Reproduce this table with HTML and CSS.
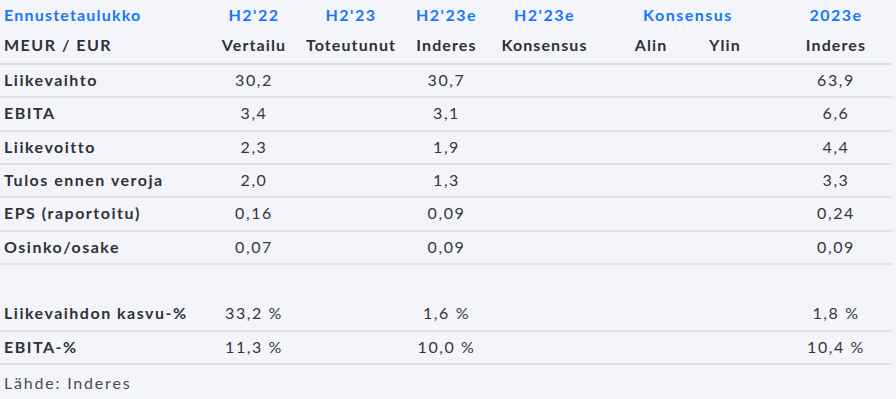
FILE: index.html
```html
<!DOCTYPE html>
<html lang="fi">
<head>
<meta charset="utf-8">
<title>Ennustetaulukko</title>
<link rel="stylesheet" href="styles.css">
</head>
<body>
<div class="table">
  <div class="head">
    <div class="row hrow1">
      <div class="c title">Ennustetaulukko</div>
      <div class="c blue">H2'22</div>
      <div class="c blue">H2'23</div>
      <div class="c blue">H2'23e</div>
      <div class="c blue">H2'23e</div>
      <div class="c blue span2">Konsensus</div>
      <div class="c blue">2023e</div>
    </div>
    <div class="row hrow2">
      <div class="c lab">MEUR / EUR</div>
      <div class="c b">Vertailu</div>
      <div class="c b">Toteutunut</div>
      <div class="c b">Inderes</div>
      <div class="c b">Konsensus</div>
      <div class="c b">Alin</div>
      <div class="c b ylin">Ylin</div>
      <div class="c b">Inderes</div>
    </div>
  </div>
  <div class="row d"><div class="c lab">Liikevaihto</div><div class="c v">30,2</div><div class="c v"></div><div class="c v">30,7</div><div class="c v"></div><div class="c v"></div><div class="c v"></div><div class="c v">63,9</div></div>
  <div class="row d"><div class="c lab">EBITA</div><div class="c v">3,4</div><div class="c v"></div><div class="c v">3,1</div><div class="c v"></div><div class="c v"></div><div class="c v"></div><div class="c v">6,6</div></div>
  <div class="row d"><div class="c lab">Liikevoitto</div><div class="c v">2,3</div><div class="c v"></div><div class="c v">1,9</div><div class="c v"></div><div class="c v"></div><div class="c v"></div><div class="c v">4,4</div></div>
  <div class="row d"><div class="c lab">Tulos ennen veroja</div><div class="c v">2,0</div><div class="c v"></div><div class="c v">1,3</div><div class="c v"></div><div class="c v"></div><div class="c v"></div><div class="c v">3,3</div></div>
  <div class="row d"><div class="c lab">EPS (raportoitu)</div><div class="c v">0,16</div><div class="c v"></div><div class="c v">0,09</div><div class="c v"></div><div class="c v"></div><div class="c v"></div><div class="c v">0,24</div></div>
  <div class="row d"><div class="c lab">Osinko/osake</div><div class="c v">0,07</div><div class="c v"></div><div class="c v">0,09</div><div class="c v"></div><div class="c v"></div><div class="c v"></div><div class="c v">0,09</div></div>
  <div class="row spacer"></div>
  <div class="row d"><div class="c lab">Liikevaihdon kasvu-%</div><div class="c v">33,2 %</div><div class="c v"></div><div class="c v">1,6 %</div><div class="c v"></div><div class="c v"></div><div class="c v"></div><div class="c v">1,8 %</div></div>
  <div class="row d"><div class="c lab">EBITA-%</div><div class="c v">11,3 %</div><div class="c v"></div><div class="c v">10,0 %</div><div class="c v"></div><div class="c v"></div><div class="c v"></div><div class="c v">10,4 %</div></div>
</div>
<div class="source">Lähde: Inderes</div>
</body>
</html>
```
FILE: styles.css
```css
html, body {
  margin: 0;
  padding: 0;
  background: #f4f5fa;
}
body {
  font-family: "Lato", "Liberation Sans", sans-serif;
  font-size: 16px;
  color: #2f3138;
  width: 896px;
  height: 399px;
  overflow: hidden;
}
.table {
  width: 892px;
}
.row {
  display: grid;
  grid-template-columns: 206px 96px 98px 93px 103px 110px 74px 112px;
  align-items: center;
}
.c {
  text-align: center;
  white-space: nowrap;
}
.lab {
  text-align: left;
  padding-left: 4px;
  font-weight: 700;
  letter-spacing: 1.5px;
}
.title {
  text-align: left;
  padding-left: 4px;
  color: #1677ff;
  font-weight: 700;
  font-size: 16px;
  letter-spacing: 1.2px;
}
.blue {
  color: #1677ff;
  font-weight: 700;
  letter-spacing: 1.5px;
}
.span2 {
  grid-column: span 2;
}
.b {
  font-weight: 700;
  letter-spacing: 1.1px;
}
.ylin {
  text-align: left;
  padding-left: 3px;
}
.hrow1 {
  height: 28px;
}
.hrow2 {
  height: 35px;
  box-sizing: border-box;
  padding-bottom: 2px;
}
.head {
  border-bottom: 2px solid #dfe0e6;
}
.d {
  height: 33.33px;
  box-sizing: border-box;
  border-bottom: 2px solid #e1e2e8;
  padding-bottom: 2px;
}
.spacer {
  height: 33.33px;
}
.v {
  letter-spacing: 1.6px;
  color: #34363d;
}
.source {
  padding: 8px 0 0 4px;
  letter-spacing: 1.8px;
  color: #4a4c53;
}
```
